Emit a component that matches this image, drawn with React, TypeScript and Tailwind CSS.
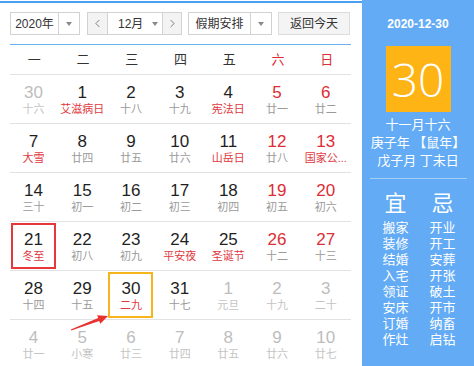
import { ChevronLeft, ChevronRight } from 'lucide-react';

type Day = { n: number; l: string; out?: boolean; red?: boolean; box?: 'red' | 'yellow' };

const weekdays = ['一', '二', '三', '四', '五', '六', '日'];

const weeks: Day[][] = [
  [
    { n: 30, l: '十六', out: true },
    { n: 1, l: '艾滋病日', red: true },
    { n: 2, l: '十八' },
    { n: 3, l: '十九' },
    { n: 4, l: '宪法日', red: true },
    { n: 5, l: '廿一' },
    { n: 6, l: '廿二' },
  ],
  [
    { n: 7, l: '大雪', red: true },
    { n: 8, l: '廿四' },
    { n: 9, l: '廿五' },
    { n: 10, l: '廿六' },
    { n: 11, l: '山岳日', red: true },
    { n: 12, l: '廿八' },
    { n: 13, l: '国家公...', red: true },
  ],
  [
    { n: 14, l: '三十' },
    { n: 15, l: '初一' },
    { n: 16, l: '初二' },
    { n: 17, l: '初三' },
    { n: 18, l: '初四' },
    { n: 19, l: '初五' },
    { n: 20, l: '初六' },
  ],
  [
    { n: 21, l: '冬至', red: true, box: 'red' },
    { n: 22, l: '初八' },
    { n: 23, l: '初九' },
    { n: 24, l: '平安夜', red: true },
    { n: 25, l: '圣诞节', red: true },
    { n: 26, l: '十二' },
    { n: 27, l: '十三' },
  ],
  [
    { n: 28, l: '十四' },
    { n: 29, l: '十五' },
    { n: 30, l: '二九', red: true, box: 'yellow' },
    { n: 31, l: '十七' },
    { n: 1, l: '元旦', out: true },
    { n: 2, l: '十九', out: true },
    { n: 3, l: '二十', out: true },
  ],
  [
    { n: 4, l: '廿一', out: true },
    { n: 5, l: '小寒', out: true },
    { n: 6, l: '廿三', out: true },
    { n: 7, l: '廿四', out: true },
    { n: 8, l: '廿五', out: true },
    { n: 9, l: '廿六', out: true },
    { n: 10, l: '廿七', out: true },
  ],
];

const yi = ['搬家', '装修', '结婚', '入宅', '领证', '安床', '订婚', '作灶'];
const ji = ['开业', '开工', '安葬', '开张', '破土', '开市', '纳畜', '启钻'];

const Caret = () => (
  <span className="block w-0 h-0 border-x-[3px] border-x-transparent border-t-[4px] border-t-[#8a8a8a]" />
);

const DayCell = ({ d, col }: { d: Day; col: number }) => {
  const numColor = d.out ? 'text-[#bdbdbd]' : col >= 5 ? 'text-[#dd2d35]' : 'text-[#1f1f1f]';
  const lunarColor = d.out ? 'text-[#c4c4c4]' : d.red ? 'text-[#e0383e]' : 'text-[#9a9a9a]';
  const boxColor =
    d.box === 'red' ? 'border-[#e8373a]' : d.box === 'yellow' ? 'border-[#f6b51d]' : 'border-transparent';
  return (
    <div className="h-[48px] pl-[1px] pt-[1px]">
      <div className={`w-[45px] h-[46px] border-2 ${boxColor} flex flex-col items-center`}>
        <span className={`text-[17px] leading-[20px] mt-[5px] ${numColor}`}>{d.n}</span>
        <span className={`text-[11px] leading-[12px] whitespace-nowrap ${lunarColor}`}>{d.l}</span>
      </div>
    </div>
  );
};

export default function App() {
  return (
    <div className="relative w-[474px] h-[366px] overflow-hidden flex bg-white font-['Liberation_Sans','Noto_Sans_CJK_SC',sans-serif]">
      {/* left: calendar */}
      <div className="w-[362px] h-full mt-[1px] border-t-2 border-[#4b9ff2]">
        <div className="flex pt-[9px] pl-[10px] h-[32px] text-[12px] text-[#333]">
          <div className="flex w-[70px] h-[23px] border border-[#d2d2d2]">
            <div className="w-[48px] flex items-center justify-center border-r border-[#d2d2d2]">2020年</div>
            <div className="flex-1 flex items-center justify-center">
              <Caret />
            </div>
          </div>
          <div className="flex w-[95px] h-[23px] ml-[7px] border border-[#d2d2d2]">
            <div className="w-[20px] flex items-center justify-center bg-[#f3f3f3] border-r border-[#d2d2d2]">
              <ChevronLeft size={13} strokeWidth={1.5} className="text-[#666]" />
            </div>
            <div className="w-[54px] flex items-center pl-[10px] gap-[9px]">
              <span>12月</span>
              <Caret />
            </div>
            <div className="flex-1 flex items-center justify-center bg-[#f3f3f3] border-l border-[#d2d2d2]">
              <ChevronRight size={13} strokeWidth={1.5} className="text-[#666]" />
            </div>
          </div>
          <div className="flex w-[84px] h-[23px] ml-[6px] border border-[#d2d2d2]">
            <div className="w-[62px] flex items-center justify-center border-r border-[#d2d2d2]">假期安排</div>
            <div className="flex-1 flex items-center justify-center">
              <Caret />
            </div>
          </div>
          <div className="w-[72px] h-[23px] ml-[6px] flex items-center justify-center bg-[#f4f4f4] border border-[#dcdcdc]">
            返回今天
          </div>
        </div>

        <div className="ml-[10px] w-[341px] mt-[9px] border-t border-[#6cb0f2]">
          <div className="grid grid-cols-7 h-[30px] items-center text-center text-[13px] border-b border-[#e2e2e2]">
            {weekdays.map((w, i) => (
              <span key={w} className={i >= 5 ? 'text-[#dd2d35]' : 'text-[#333]'}>
                {w}
              </span>
            ))}
          </div>
          {weeks.map((week, wi) => (
            <div key={wi} className="grid grid-cols-7 border-b border-[#e2e2e2]">
              {week.map((d, i) => (
                <DayCell key={i} d={d} col={i} />
              ))}
            </div>
          ))}
        </div>
      </div>

      {/* right: today panel */}
      <div className="w-[112px] h-full bg-[#63abf5] flex flex-col items-center text-white">
        <div className="mt-[16px] text-[12px] leading-[16px] font-bold">2020-12-30</div>
        <div className="mt-[14px] w-[65px] h-[66px] bg-[#fdb414] flex items-center justify-center text-[46px] leading-none font-['Open_Sans',sans-serif] font-light">
          30
        </div>
        <div className="mt-[4px] text-[13px] leading-[18px] text-center">
          <div>十一月十六</div>
          <div>庚子年 【鼠年】</div>
          <div>戊子月 丁未日</div>
        </div>
        <div className="mt-[8px] w-[97px] h-px bg-[#a6cff8] self-start ml-[8px]" />
        <div className="self-start ml-[10px] mt-[13px] grid grid-cols-[47px_47px] text-center">
          <div className="text-[22px] leading-[24px]">宜</div>
          <div className="text-[22px] leading-[24px]">忌</div>
          <div className="mt-[4px] text-[13px] leading-[16px]">
            {yi.map((t) => (
              <div key={t}>{t}</div>
            ))}
          </div>
          <div className="mt-[4px] text-[13px] leading-[16px]">
            {ji.map((t) => (
              <div key={t}>{t}</div>
            ))}
          </div>
        </div>
      </div>

      {/* red arrow pointing at today */}
      <svg className="absolute left-0 top-0 pointer-events-none" width="474" height="366">
        <polygon
          points="70.8,329.5 98.2,318.1 97.1,315.3 108,316 100.3,323.7 99.2,320.9 71.2,330.5"
          fill="#e8322f"
        />
      </svg>
    </div>
  );
}
